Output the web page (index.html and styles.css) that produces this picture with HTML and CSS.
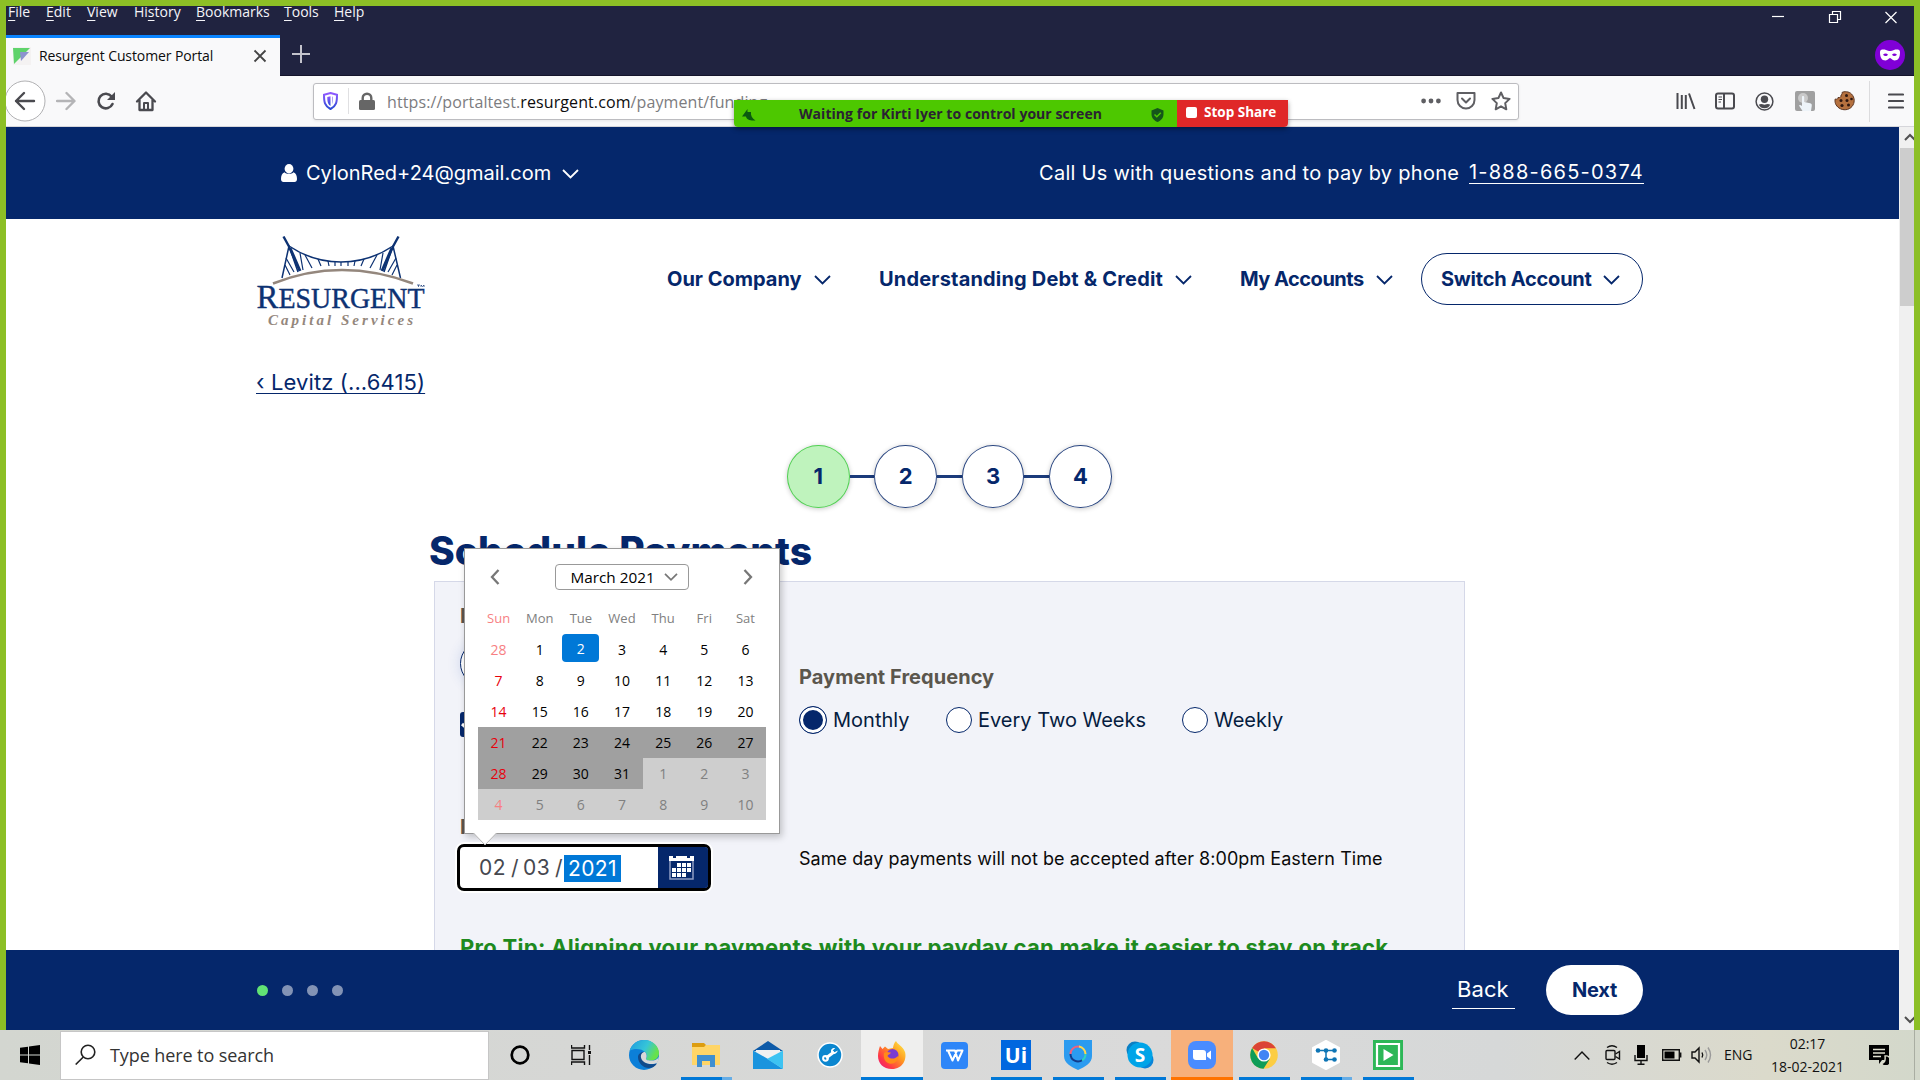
FILE: index.html
```html
<!DOCTYPE html>
<html lang="en">
<head>
<meta charset="utf-8">
<title>Resurgent Customer Portal</title>
<link rel="stylesheet" href="styles.css">
</head>
<body>
<div class="window">
  <div class="titlebar">
    <nav class="menubar">
      <span class="m-file"><u>F</u>ile</span><span class="m-edit"><u>E</u>dit</span><span class="m-view"><u>V</u>iew</span><span class="m-history">Hi<u>s</u>tory</span><span class="m-bookmarks"><u>B</u>ookmarks</span><span class="m-tools"><u>T</u>ools</span><span><u>H</u>elp</span>
    </nav>
    <svg class="win-controls" width="128" height="16" viewBox="0 0 128 16" fill="none" stroke="#fff" stroke-width="1.2">
      <path d="M0 7.500h12"/><path d="M57.5 5.500h8v8h-8zM60.500 5.500v-3h8v8h-3"/><path d="M113.500 3l11 11M124.500 3l-11 11"/>
    </svg>
  </div>
  <div class="tabstrip">
    <div class="tab">
      <svg width="18" height="18" viewBox="0 0 18 18"><path fill="#f4f2f2" d="M0 0h18v18H0z"/><path fill="#5fd36b" d="M0 1h17L1 17z"/><path fill="#8c93cf" d="M7 5h9L8 14z"/></svg>
      <span class="tab-title">Resurgent Customer Portal</span>
      <svg class="tab-close" width="14" height="14" viewBox="0 0 14 14" stroke="#444" stroke-width="1.800"><path d="M1.500 1.500l11 11M12.500 1.500l-11 11"/></svg>
    </div>
    <svg class="tab-new" width="18" height="18" viewBox="0 0 18 18" stroke="#c3c3cc" stroke-width="2"><path d="M9 0v18M0 9h18"/></svg>
    <svg class="mask" width="30" height="30" viewBox="0 0 30 30"><circle cx="15" cy="15" r="15" fill="#8000d7"/><path fill="#fff" fill-rule="evenodd" d="M5 12c0-3 4-2.500 6-2 2 .6 2.500 1 4 1s2-.4 4-1c2-.5 6-1 6 2 0 5-1.500 8.500-5.500 8.500-2.500 0-3-2.500-4.500-2.500s-2 2.500-4.500 2.500C6.500 20.500 5 17 5 12zm3 2.800c1.500 1.700 3.800 1.700 5 0-1.200-1.700-3.500-1.700-5 0zm9 0c1.200 1.700 3.500 1.700 5 0-1.500-1.700-3.800-1.700-5 0z"/></svg>
  </div>
  <div class="toolbar">
    <svg class="nav-back" width="40" height="44" viewBox="0 0 40 44"><circle cx="19" cy="22" r="20" fill="#fff" stroke="#b1b1b3"/><path fill="none" stroke="#4a4a4f" stroke-width="2.400" stroke-linecap="round" stroke-linejoin="round" d="M28 22H10M18 14l-8 8 8 8"/></svg>
    <svg class="nav-fwd" width="20" height="20" viewBox="0 0 20 20" fill="none" stroke="#b4b4b6" stroke-width="2.400" stroke-linecap="round" stroke-linejoin="round"><path d="M1 10h17M10.500 2l8 8-8 8"/></svg>
    <svg class="nav-reload" width="20" height="20" viewBox="0 0 20 20"><path fill="none" stroke="#4a4a4f" stroke-width="2.600" stroke-linecap="round" d="M15.600 5.500A7.300 7.300 0 1 0 16.500 13"/><path fill="#4a4a4f" d="M19 1v8h-8z"/></svg>
    <svg class="nav-home" width="22" height="22" viewBox="0 0 22 22" fill="none" stroke="#4a4a4f" stroke-width="2.300" stroke-linejoin="round" stroke-linecap="round"><path d="M2 11.500L11 2.500l9 9M4.500 10v10h13V10"/><path stroke-width="2" d="M9 19v-6h4v6"/></svg>
    <div class="urlbar">
      <svg class="u-shield" width="15" height="18" viewBox="0 0 15 18"><defs><linearGradient id="sh" x1="0" y1="0" x2="0" y2="1"><stop offset="0" stop-color="#9059ff"/><stop offset="1" stop-color="#2a4bd5"/></linearGradient></defs><path fill="none" stroke="url(#sh)" stroke-width="2" d="M7.500 1L14 2.800c0 7-.5 11-6.500 14.200C1.500 13.800 1 9.800 1 2.800z"/><path fill="url(#sh)" d="M7.500 4.200L4.300 5c0 4.500.5 7 3.200 9zM9 4.600l.6.200c0 3 0 5.500-.6 7.500z"/></svg>
      <span class="u-sep"></span>
      <svg class="u-lock" width="16" height="18" viewBox="0 0 16 18"><rect x="0" y="8" width="16" height="10" rx="1.500" fill="#666"/><path d="M3.700 9V6a4.300 4.300 0 0 1 8.600 0v3" fill="none" stroke="#666" stroke-width="2.400"/></svg>
      <span class="url">https://portaltest.<b>resurgent.com</b>/payment/funding</span>
      <svg class="u-dots" width="20" height="6" viewBox="0 0 20 6" fill="#5f5f63"><circle cx="2.600" cy="3" r="2.400"/><circle cx="10" cy="3" r="2.400"/><circle cx="17.400" cy="3" r="2.400"/></svg>
      <svg class="u-pocket" width="20" height="18" viewBox="0 0 20 18" fill="none" stroke="#5f5f63" stroke-width="2" stroke-linejoin="round" stroke-linecap="round"><path d="M1.500 1h17v7a8.500 8.500 0 0 1-17 0z"/><path d="M6 6.500l4 4 4-4"/></svg>
      <svg class="u-star" width="20" height="20" viewBox="0 0 20 20" fill="none" stroke="#5f5f63" stroke-width="2" stroke-linejoin="round"><path d="M10 1.500l2.600 5.600 6 .8-4.400 4.200 1.100 6.200L10 15.300l-5.300 3 1.100-6.200L1.400 7.900l6-.8z"/></svg>
    </div>
    <svg class="t-lib" width="20" height="18" viewBox="0 0 20 18" stroke="#4a4a4f" stroke-width="2"><path d="M1.500 1v16M5.800 3v14M9.800 3v14M13 1.500L18.500 17"/></svg>
    <svg class="t-side" width="20" height="18" viewBox="0 0 20 18" fill="none" stroke="#4a4a4f" stroke-width="2"><rect x="1" y="1.500" width="18" height="15" rx="2"/><path d="M9 2v14"/><path stroke-width="1.200" d="M3.500 5h3.500M3.500 7.500h3.500M3.500 10h2.500"/></svg>
    <svg class="t-acct" width="19" height="19" viewBox="0 0 19 19"><circle cx="9.500" cy="9.500" r="8.400" fill="none" stroke="#4a4a4f" stroke-width="1.500"/><circle cx="9.500" cy="7.300" r="3.700" fill="#4a4a4f"/><path fill="#4a4a4f" d="M3.800 12.800c1.500-1 3-1 5.700 0 2.700-1 4.200-1 5.700 0-1 2.500-3 3.400-5.700 3.400s-4.700-.9-5.700-3.400z"/></svg>
    <svg class="t-touch" width="20" height="20" viewBox="0 0 20 20"><rect width="20" height="20" rx="2" fill="#a0a0a0"/><circle cx="8" cy="7" r="5" fill="#c9c9c9"/><path fill="#eef4f9" d="M7 5.500c1-1 2.200-.4 2.200.8V11l6 1.300c1.600.4 1.800 1.400 1.500 3L16 20H7.500L4 14.500c.6-1 1.800-.6 3 .5z"/></svg>
    <svg class="t-cookie" width="21" height="20" viewBox="0 0 21 20"><path fill="#b5713f" stroke="#5b3420" stroke-width="1" d="M8 1.500C10 .2 15 .3 17.500 3c3.500 3.500 3.500 9 .5 12.500-3 3.700-9 4.300-13 1.500-3.500-2.500-4.500-6-3.800-9C3 8.500 4 8 4 6.500c2 .3 3.500-.5 3-2.500 1-.5 1.400-1.500 1-2.500z"/><g fill="#2e1710"><circle cx="12.500" cy="4.500" r="1.500"/><circle cx="7" cy="9.500" r="1.500"/><circle cx="13" cy="9.500" r="1.500"/><circle cx="17.500" cy="8" r="1.300"/><circle cx="8" cy="14.500" r="1.600"/><circle cx="14.500" cy="14" r="1.500"/></g></svg>
    <span class="t-sep"></span>
    <svg class="t-menu" width="16" height="16" viewBox="0 0 16 16" stroke="#4a4a4f" stroke-width="2.200" stroke-linecap="round"><path d="M1 1.500h14M1 8h14M1 14.500h14"/></svg>
  </div>

  <div class="share">
    <div class="share-status">
      <svg width="14" height="12" viewBox="0 0 14 12"><path fill="#0b5a10" d="M5.500 0v3H9c-.5 3.500 1 6.500 4.500 8.500C8 12 4.500 10.500 4 7.500H0z"/></svg>
      <span>Waiting for Kirti Iyer to control your screen</span>
      <svg width="13" height="14" viewBox="0 0 13 14"><path fill="#14561a" d="M6.500 0L12.500 2.500V6c0 4-2.500 6.500-6 8-3.500-1.500-6-4-6-8V2.500z"/><path d="M3.500 6.500l2.300 2.300 4-4" fill="none" stroke="#4dc800" stroke-width="1.500"/></svg>
    </div>
    <div class="share-stop"><i></i><span>Stop Share</span></div>
  </div>

  <div class="viewport">
    <main class="page">
      <header class="topbar">
        <svg class="user" width="16" height="18" viewBox="0 0 16 18" fill="#fff"><ellipse cx="8" cy="4.700" rx="4.400" ry="4.700"/><path d="M3.500 8.200C5 10.200 11 10.200 12.500 8.200 15 9 16 12 16 15c0 2-1 3-2.500 3h-11C1 18 0 17 0 15c0-3 1-6 3.500-6.800z"/></svg>
        <span class="email">CylonRed+24@gmail.com</span>
        <svg class="chev" width="17" height="10" viewBox="0 0 17 10"><path d="M1 1l7.500 7.500L16 1"/></svg>
        <span class="call">Call Us with questions and to pay by phone</span>
        <a class="phone">1-888-665-0374</a>
      </header>
      <div class="mainnav">
        <svg class="logo" width="172" height="96" viewBox="256 234 172 96">
          <g fill="none" stroke="#0d3273" stroke-width="1.500">
            <path stroke-width="2.400" d="M283.500 236.500l5.500 10M398.500 236.500l-5.500 10"/>
            <path d="M289 246l-7 32M393 246l7.500 32M289 246l9 26M393 246l-9 26"/>
            <path stroke-width="3" d="M290 248l10 23M392 248l-10 23"/>
            <path d="M289 246q24 16 52 16t52-16"/>
            <path stroke-width="1.200" d="M286 258l8 14M285 265l5 10M396 258l-8 14M397 265l-5 10M305 255l7 13M318 259l3 7M328 261l1 5M335 262v4M341 262v4M348 262v4M355 261l-1 5M364 259l-3 7M377 255l-7 13M300 253l3 17M383 253l-3 17"/>
          </g>
          <path d="M273 283.500q68-27 140 0" fill="none" stroke="#94877d" stroke-width="2.600"/>
          <text class="logo-name" x="256.500" y="307.500" textLength="168" lengthAdjust="spacingAndGlyphs"><tspan font-size="34">R</tspan>ESURGENT</text>
          <text class="logo-sub" x="268" y="325" textLength="145">Capital Services</text>
          <path d="M417 285h3M418.500 285v2M421 287v-2l1.500 1.500L424 285v2" fill="none" stroke="#0d3273" stroke-width=".7"/>
        </svg>
        <span class="n1">Our Company</span><svg class="chev c1" width="17" height="10" viewBox="0 0 17 10"><path d="M1 1l7.500 7.500L16 1"/></svg>
        <span class="n2">Understanding Debt &amp; Credit</span><svg class="chev c2" width="17" height="10" viewBox="0 0 17 10"><path d="M1 1l7.500 7.500L16 1"/></svg>
        <span class="n3">My Accounts</span><svg class="chev c3" width="17" height="10" viewBox="0 0 17 10"><path d="M1 1l7.500 7.500L16 1"/></svg>
        <div class="pill"><span>Switch Account</span><svg class="chev" width="17" height="10" viewBox="0 0 17 10"><path d="M1 1l7.500 7.500L16 1"/></svg></div>
      </div>
      <a class="crumb">‹ Levitz (...6415)</a>
      <div class="steps"><b class="on">1</b><i></i><b>2</b><i></i><b>3</b><i></i><b>4</b></div>
      <h1>Schedule Payments</h1>
      <section class="card">
        <div class="cols">
          <div class="left">
            <div class="label">P</div>
            <div class="amount"></div>
            <div class="check"><svg width="25" height="25" viewBox="0 0 25 25"><path d="M2 12l8 7L21 6" fill="none" stroke="#fff" stroke-width="3"/></svg></div>
            <div class="label second">P</div>
            <div class="date">
              <span class="dval">02</span><span class="dsl">/</span><span class="dval">03</span><span class="dsl">/</span><span class="dyear">2021</span>
              <span class="dbtn"><svg width="25" height="25" viewBox="0 0 25 25"><path d="M1 6v18h23V6" fill="none" stroke="#8f9dc3" stroke-width="1.500"/><path fill="#fff" d="M0 1h4v2h3V1h11v2h3V1h4v5H0z"/><g fill="#fff"><path d="M8 8h4v4H8zM13 8h4v4h-4zM18 8h4v4h-4zM3 13h4v4H3zM8 13h4v4H8zM13 13h4v4h-4zM18 13h4v4h-4zM3 18h4v4H3zM8 18h4v4H8zM13 18h4v4h-4z"/></g></svg></span>
              <div class="picker">
                <div class="phead">
                  <svg width="10" height="16" viewBox="0 0 10 16"><path d="M8.500 1L2 8l6.500 7"/></svg>
                  <div class="month"><span>March 2021</span><svg width="14" height="8" viewBox="0 0 14 8"><path d="M1 .8l6 6 6-6"/></svg></div>
                  <svg width="10" height="16" viewBox="0 0 10 16"><path d="M1.500 1L8 8l-6.500 7"/></svg>
                </div>
                <div class="days names"><span class="s">Sun</span><span>Mon</span><span>Tue</span><span>Wed</span><span>Thu</span><span>Fri</span><span>Sat</span></div>
                <div class="days">
                  <span class="s out">28</span><span>1</span><span><em>2</em></span><span>3</span><span>4</span><span>5</span><span>6</span>
                  <span class="s">7</span><span>8</span><span>9</span><span>10</span><span>11</span><span>12</span><span>13</span>
                  <span class="s">14</span><span>15</span><span>16</span><span>17</span><span>18</span><span>19</span><span>20</span>
                  <span class="s d">21</span><span class="d">22</span><span class="d">23</span><span class="d">24</span><span class="d">25</span><span class="d">26</span><span class="d">27</span>
                  <span class="s d">28</span><span class="d">29</span><span class="d">30</span><span class="d">31</span><span class="l">1</span><span class="l">2</span><span class="l">3</span>
                  <span class="s l out">4</span><span class="l">5</span><span class="l">6</span><span class="l">7</span><span class="l">8</span><span class="l">9</span><span class="l">10</span>
                </div>
                <svg class="ptr" width="24" height="13" viewBox="0 0 24 13"><path fill="#fff" stroke="#b5b5b5" d="M.5 0L12 12 23.500 0"/></svg>
              </div>
            </div>
          </div>
          <div class="right">
            <div class="label freq">Payment Frequency</div>
            <div class="radios"><i class="sel"></i><span class="r1">Monthly</span><i></i><span class="r2">Every Two Weeks</span><i></i><span>Weekly</span></div>
            <p>Same day payments will not be accepted after 8:00pm Eastern Time</p>
          </div>
        </div>
        <div class="tip">Pro Tip: Aligning your payments with your payday can make it easier to stay on track</div>
      </section>
      <footer class="foot">
        <div class="dots"><i class="on"></i><i></i><i></i><i></i></div>
        <a class="back">Back</a><span class="next">Next</span>
      </footer>
    </main>
    <div class="scroll">
      <svg width="14" height="21" viewBox="0 0 14 21"><path d="M5 13l5-5 5 5"/></svg>
      <span class="thumb"></span>
      <svg class="down" width="14" height="21" viewBox="0 0 14 21"><path d="M5 8l5 5 5-5"/></svg>
    </div>
  </div>
</div>

<div class="taskbar">
  <div class="start"><svg width="20" height="20" viewBox="0 0 20 20"><path d="M0 2.800L8 1.700V9.500H0zM9 1.500L20 0v9.500H9zM0 10.500h8v7.800l-8-1.100zM9 10.500h11V20L9 18.500z"/></svg></div>
  <div class="search"><svg width="21" height="21" viewBox="0 0 21 21" fill="none" stroke="#222" stroke-width="1.600"><circle cx="13" cy="8" r="6.800"/><path d="M8.300 13L.7 20.500"/></svg><span>Type here to search</span></div>
  <div class="slot"><svg width="20" height="20" viewBox="0 0 20 20"><circle cx="10" cy="10" r="8.300" fill="none" stroke="#000" stroke-width="2.700"/></svg></div>
  <div class="slot"><svg width="22" height="20" viewBox="0 0 22 20" fill="none" stroke="#111" stroke-width="1.400"><path d="M1 5.500h12v9H1zM.5 0v3h13V0M.5 20v-3h13v3M18.500 0v5M18.500 10v10"/><path fill="#111" stroke="none" d="M17 6h3v3h-3z"/></svg></div>
  <div class="slot"><svg width="30" height="30" viewBox="0 0 30 30"><defs><linearGradient id="eg" x1="0" x2="1" y1="0" y2=".4"><stop offset="0" stop-color="#1d9be0"/><stop offset=".6" stop-color="#36c5d8"/><stop offset="1" stop-color="#67e24b"/></linearGradient></defs><circle cx="15" cy="15" r="15" fill="#0c7fd8"/><path fill="url(#eg)" d="M.5 11C3 3.500 8.500 0 15 0c9 0 15 6.500 15 13 0 5-4 7.500-8 7.500-3.500 0-5.500-1-5-2 1.500-2 1.200-4-.5-6C13 8.500 5 8 .5 11z"/><path fill="#114a8b" d="M9 17c0 6 5 11 11 11 3 0 6-1.500 8-4.500-6 2-13 0-14.500-5-.8-3 .5-5.500 1.500-6.500-3 0-6 2-6 5z"/><path fill="#d8d8d8" d="M16 12c-3 0-4.500 2.500-4 5.500.7 4 5 6.500 10.500 6.500 2.500 0 4-.5 6-1.500l1.500-5.500c-2 3-5 3.500-8 3.500-3.500 0-5.500-1-5-2 1.200-1.800.8-4.500-1-6.500z"/></svg></div>
  <div class="slot run more"><svg width="28" height="24" viewBox="0 0 28 24"><path fill="#dd9d10" d="M0 0h12l2 2-2 4H0z"/><path fill="#ffd567" d="M0 4h12l2-2h14v20H0z"/><path fill="#3f8fd0" d="M5 24V12h18v12h-5v-6h-8v6z"/></svg></div>
  <div class="slot"><svg width="30" height="28" viewBox="0 0 30 28"><path fill="#0d5aa8" d="M15 0l15 10H0z"/><path fill="#f1f1f1" d="M3 9h24v9H3z"/><path fill="#1a94de" d="M0 9.500L15 18 30 28H0z"/><path fill="#3dc3f2" d="M30 9.500L14 18l16 10z"/></svg></div>
  <div class="slot"><svg width="26" height="26" viewBox="0 0 26 26"><circle cx="13" cy="13" r="12" fill="#0b86cf" stroke="#fff" stroke-width="1.500"/><path d="M9 16l8-6" stroke="#fff" stroke-width="3"/><circle cx="8.500" cy="16.300" r="2.400" fill="none" stroke="#fff" stroke-width="2"/><path d="M20.800 8.500l-3.300 1.800-1.800-1.800L18.300 6c-3.300-.3-5 2-4 4.300s5.500 2.500 6.500-1.800z" fill="#fff"/></svg></div>
  <div class="slot active"><svg width="30" height="30" viewBox="0 0 30 30"><defs><linearGradient id="ff" x1="1" x2="0" y1="0" y2="1"><stop offset="0" stop-color="#fff44f"/><stop offset=".4" stop-color="#ff9a1f"/><stop offset=".75" stop-color="#ff3647"/><stop offset="1" stop-color="#e31587"/></linearGradient></defs><path fill="url(#ff)" d="M3 6l2.500 3L8 6.500 11 9l5-1c.5-3 1-5 3-7 1 3 7 5 9 11 2 7-2 17-13 17C6 29 1 23 1 16c0-4 1-7 2-10z"/><circle cx="15.500" cy="15" r="6" fill="#7a3bd1"/><path fill="#ff8b1a" d="M7 13c3-2 5 0 7-.5-1 2-3 2-3.500 3.500 3 4 8 3 11-.5 0 6-5 9-9 8-4-.8-6.500-5-5.500-10.500z"/></svg></div>
  <div class="slot"><svg width="27" height="27" viewBox="0 0 27 27"><rect width="27" height="27" rx="4" fill="#2e86f8"/><path d="M5 8.500h9l3 10 4.500-10H16l-4.500 10L7 8.500" fill="none" stroke="#fff" stroke-width="2" stroke-linejoin="round"/></svg></div>
  <div class="slot run"><div class="ui">Ui</div></div>
  <div class="slot run"><svg width="28" height="30" viewBox="0 0 28 30"><path fill="#2b9bf0" d="M0 0h28v16c0 7-7 11-14 14C7 27 0 23 0 16z"/><g fill="none" stroke-width="2"><path stroke="#123c8c" d="M6.500 14a7.500 7.500 0 0 0 12 6"/><path stroke="#f2607d" d="M6.500 14a7.500 7.500 0 0 1 9.500-7.300"/><path stroke="#ffd84f" d="M15 6.600a7.500 7.500 0 0 1 6.500 7.400"/><path stroke="#2fd3c0" d="M21.500 14a7.500 7.500 0 0 1-3.500 6.400"/></g></svg></div>
  <div class="slot run"><svg width="28" height="28" viewBox="0 0 28 28"><circle cx="9" cy="9" r="8.500" fill="#0a7fc4"/><circle cx="19" cy="19" r="8.500" fill="#0a84d8"/><circle cx="14" cy="14" r="12.500" fill="#00a4e8"/><text class="skype" x="14" y="21" text-anchor="middle">S</text></svg></div>
  <div class="slot zoom"><svg width="28" height="28" viewBox="0 0 28 28"><rect width="28" height="28" rx="8" fill="#4a8cff"/><path fill="#fff" d="M5 9h10q3 0 3 3v7H8q-3 0-3-3zM19 12.500L23 9.500v9l-4-3z"/></svg></div>
  <div class="slot run"><svg width="28" height="28" viewBox="0 0 28 28"><circle cx="14" cy="14" r="13.800" fill="#fccd43"/><path fill="#db4437" d="M14 14L2.100 7A13.800 13.800 0 0 1 26 7.300H14z"/><path fill="#0f9d58" d="M2.100 7A13.800 13.800 0 0 0 13.500 27.800L20 17.500 14 14 8 17.300z"/><circle cx="14" cy="14" r="6.600" fill="#fff"/><circle cx="14" cy="14" r="5.200" fill="#4285f4"/></svg></div>
  <div class="slot run more"><svg width="28" height="30" viewBox="0 0 28 30"><path fill="#fff" stroke="#fff" stroke-width="2" stroke-linejoin="round" d="M14 1l13 7v14l-13 7-13-7V8z"/><path d="M6 10.500h16M14 10.500v9h8" stroke="#0e75b5" stroke-width="1.500" fill="none"/><g fill="#0e75b5"><circle cx="6" cy="10.500" r="2.300"/><circle cx="14" cy="10.500" r="2.300"/><circle cx="22.500" cy="10.500" r="2.300"/><circle cx="14" cy="19.500" r="2.300"/><circle cx="22.500" cy="19.500" r="2.300"/></g></svg></div>
  <div class="slot run"><svg width="30" height="30" viewBox="0 0 30 30"><path fill="#2db757" d="M0 0h30v30H0z"/><path fill="none" stroke="#fff" stroke-width="2.200" d="M4 4h22v22H4z"/><path fill="#fff" d="M10.500 9l10 6-10 6z"/></svg></div>
  <div class="tray">
    <svg width="16" height="9" viewBox="0 0 16 9"><path d="M.7 8.500L8 1l7.300 7.500"/></svg>
    <svg class="y1" width="16" height="20" viewBox="0 0 16 20"><rect x="1" y="5.500" width="9" height="9" rx="1"/><path d="M10.500 9l4-2.500v7.500l-4-2.500M2 2.500C5 .5 9 .5 12 2.500M2 17.500c3 2 7 2 10 0"/></svg>
    <svg class="y2" width="14" height="20" viewBox="0 0 14 20"><path fill="#000" stroke="none" d="M3 0h8v13H3z"/><path d="M1 10v5.500h12V10M7 15.500V19M3.500 19.200h7"/></svg>
    <svg class="y3" width="20" height="12" viewBox="0 0 20 12"><path d="M.7 .7h16.600v10.600H.7zM18.700 3.500v5"/><path fill="#000" stroke="none" d="M2.500 2.500h10v7h-10z"/></svg>
    <svg class="y4" width="21" height="18" viewBox="0 0 21 18"><path d="M1 6h3l4-4v14l-4-4H1zM11 6.500q1.500 2.500 0 5"/><path stroke="#999" d="M14 4q3.500 5 0 10M17 1.500q5 7.500 0 15"/></svg>
    <span class="eng">ENG</span>
    <div class="clock"><span>02:17</span><span>18-02-2021</span></div>
    <svg class="y5" width="20" height="20" viewBox="0 0 20 20"><path fill="#000" stroke="none" d="M0 0h20v15h-7l-3 4v-4H0z"/><path stroke="#e0e0d0" d="M4 4.500h12M4 8h12M4 11.500h8"/><path fill="#000" stroke="#e0e0d0" d="M16 11a5 5 0 1 1-3.500 7.500Q17 17.500 16 11z"/></svg>
    <i class="peek"></i>
  </div>
</div>
</body>
</html>
```
FILE: styles.css
```css
* { box-sizing: border-box; }
body { margin: 0; width: 1920px; height: 1080px; overflow: hidden; font-family: "Inter", sans-serif; font-size: 20px; color: #05276b; }
svg { display: block; flex: none; }
span, a { white-space: nowrap; }

.window { position: relative; display: flex; flex-direction: column; height: 1030px; border: 6px solid #8cbf26; border-bottom: 0; font-weight: 400; }

/* browser chrome */
.titlebar { display: flex; height: 29px; background: #202340; }
.menubar { display: flex; width: 1766px; padding-left: 2px; font: 14px/11px "Open Sans", sans-serif; color: #f4f4f8; }
.menubar u { text-underline-offset: 3px; text-decoration-thickness: 1px; }
.m-file { width: 38px; } .m-edit { width: 41px; } .m-view { width: 47px; } .m-history { width: 62px; } .m-bookmarks { width: 88px; } .m-tools { width: 50px; }
.win-controls { margin-top: 3px; }
.tabstrip { display: flex; height: 41px; background: #202340; border-bottom: 1px solid #14142b; }
.tab { display: flex; align-items: center; width: 274px; height: 42px; padding: 0 13px 0 7px; background: #f9f9fa; border-top: 3px solid #0a84ff; }
.tab svg { margin-top: -3px; }
.tab-title { margin: -4px 0 0 8px; font: 14px/20px "Open Sans", sans-serif; letter-spacing: -.1px; color: #0c0c0d; }
.tab-close { margin-left: auto; }
.tab-new { margin: 10px 0 0 12px; }
.mask { margin: 5px 9px 0 auto; }
.toolbar { display: flex; align-items: center; height: 51px; background: #f9f9fa; border-bottom: 1px solid #d6d6da; }
.nav-fwd { margin-left: 10px; } .nav-reload { margin-left: 20px; } .nav-home { margin-left: 19px; }
.urlbar { display: flex; align-items: center; width: 1206px; height: 37px; margin-left: 156px; padding-left: 9px; background: #fff; border: 1px solid #bcbcc0; border-radius: 3px; box-shadow: 0 1px 3px rgba(0,0,0,.08); }
.u-sep { width: 1px; height: 26px; margin-left: 10px; background: #e0e0e2; }
.u-lock { margin-left: 10px; }
.url { width: 1034px; margin: 1px 0 0 12px; font: 16px/24px "Open Sans", sans-serif; letter-spacing: .1px; color: #7c7c80; }
.url b { font-weight: 400; color: #0c0c0d; }
.u-pocket { margin-left: 15px; } .u-star { margin-left: 15px; }
.t-lib { margin-left: 157px; } .t-side { margin-left: 19px; } .t-acct { margin-left: 20px; } .t-touch { margin-left: 21px; } .t-cookie { margin-left: 19px; }
.t-sep { width: 1px; height: 41px; margin-left: 14px; background: #dcdcde; }
.t-menu { margin-left: 18px; }

/* screen sharing strip floating over the browser */
.share { position: absolute; left: 728px; top: 94px; display: flex; height: 27px; border-radius: 0 0 4px 4px; overflow: hidden; box-shadow: 0 2px 5px rgba(0,0,0,.4); font: 700 14px/20px "Open Sans", sans-serif; }
.share-status { display: flex; align-items: center; width: 443px; padding: 0 13px 0 8px; background: #4dc800; color: #2a2233; }
.share-status span { width: 395px; padding-left: 43px; letter-spacing: .05px; }
.share-status svg { margin-top: 2px; }
.share-stop { display: flex; align-items: center; width: 111px; padding: 0 0 3px 9px; color: #fff; font-size: 13.500px; background: #e02828; }
.share-stop i { width: 11px; height: 11px; margin-right: 7px; border-radius: 2px; background: #fff; }

/* page */
.viewport { display: flex; height: 903px; }
.page { display: flex; flex-direction: column; width: 1893px; background: #fff; overflow: hidden; }
.chev { fill: none; stroke: currentColor; stroke-width: 1.800; }
.topbar { display: flex; flex: none; align-items: center; height: 92px; padding-left: 275px; background: #05276b; color: #fff; }
.email { width: 256px; margin-left: 9px; }
.topbar .chev { margin-top: 2px; }
.call { width: 430px; margin: -1px 0 0 460px; letter-spacing: .28px; }
.phone { letter-spacing: 1.220px; line-height: 20px; padding-bottom: 1px; border-bottom: 1px solid #fff; }
.mainnav { display: flex; flex: none; align-items: center; height: 120px; padding-left: 250px; font-weight: 700; }
.logo { margin: 6px 239px 0 0; }
.logo-name { font: 29px "Liberation Serif", serif; fill: #0d3273; stroke: #0d3273; stroke-width: .4px; }
.logo-sub { font: italic 700 15px "Liberation Serif", serif; fill: #94877d; }
.mainnav .chev { margin-top: 2px; }
.c1 { margin-left: 12px; } .c2 { margin-left: 11px; } .c3 { margin-left: 12px; }
.n1 { width: 134.500px; } .n2 { width: 285px; margin-left: 48.500px; letter-spacing: .18px; } .n3 { width: 124px; margin-left: 48px; letter-spacing: -.5px; }
.pill { display: flex; align-items: center; justify-content: space-between; width: 222px; height: 52px; margin-left: 28px; padding: 0 22px 0 19px; border: 1px solid #05276b; border-radius: 26px; letter-spacing: -.25px; }
.crumb { align-self: flex-start; margin: 28px 0 0 250px; font-size: 22px; line-height: 30px; letter-spacing: .12px; text-decoration: underline; text-underline-offset: 3px; text-decoration-thickness: 1px; }
.steps { display: flex; align-items: center; margin: 48px 0 0 781px; }
.steps b { display: flex; align-items: center; justify-content: center; width: 62.500px; height: 63px; padding-bottom: 1px; border: 1px solid #2a4680; border-radius: 50%; font-size: 22px; box-shadow: 0 1px 5px rgba(0,0,0,.22); }
.steps .on { background: #bff3bd; border-color: #52d154; }
.steps i { width: 24.900px; height: 3px; background: #1b3b7b; }
h1 { margin: 22px 0 0 423px; font-size: 39px; line-height: 42px; font-weight: 800; letter-spacing: .05px; }
.card { flex: none; width: 1031px; height: 369px; margin: 9px 0 0 428px; padding-left: 25px; background: #f2f3f9; border: 1px solid #d5d8e8; border-bottom: 0; }
.cols { display: grid; grid-template-columns: 339px 1fr; height: 352px; }
.label { height: 20px; line-height: 20px; font-weight: 700; color: #5b564d; }
.left { padding-top: 24px; }
.amount { width: 250px; height: 45px; margin-top: 15px; border: 1px solid #05276b; border-radius: 23px; background: #fff; box-shadow: 0 0 14px rgba(40,80,180,.16); }
.check { width: 25px; height: 25px; margin-top: 26px; border-radius: 3px; background: #05276b; }
.second { margin-top: 80px; }
.date { position: relative; display: flex; align-items: center; width: 254px; height: 47px; margin: 7px 0 0 -3px; padding-left: 19px; background: #fff; border: 3px solid #000; border-radius: 7px; box-shadow: 0 0 0 2px #fff; font-size: 21px; line-height: 26px; color: #46484f; }
.dval { width: 29px; letter-spacing: .5px; } .dsl { width: 15px; padding-left: 3px; }
.dval, .dsl { padding-top: 1px; }
.dval + .dsl + .dyear { width: 57px; height: 27px; margin: 1px 0 0 -3px; padding-left: 4px; line-height: 27px; background: #0078d7; color: #fff; letter-spacing: .4px; }
.dbtn { display: flex; align-items: center; width: 50px; height: 41px; margin-left: auto; padding-left: 11px; background: #05276b; border-radius: 0 3px 3px 0; }
.freq { margin-top: 85px; letter-spacing: .04px; }
.radios { display: flex; align-items: center; height: 28px; margin-top: 19px; color: #061c3f; }
.radios i { width: 26px; height: 26px; margin-right: 6px; border: 1px solid #05276b; border-radius: 50%; background: #fff; }
.radios .sel { width: 28px; height: 28px; border-width: 1.500px; background: #05276b; box-shadow: inset 0 0 0 3px #fff; }
.r1 { width: 113px; } .r2 { width: 204px; }
.right p { margin: 115px 0 0; font-size: 18px; line-height: 20px; letter-spacing: .05px; color: #0a0a0a; }
.tip { font-size: 22px; line-height: 26px; font-weight: 700; letter-spacing: .29px; color: #1e8a1e; white-space: nowrap; }

/* native date popup, floats above the form */
.picker { position: absolute; left: 4px; top: -299px; width: 316px; height: 286px; padding: 15px 12px 0 13px; background: #fff; border: 1px solid #999; box-shadow: 2px 3px 7px rgba(0,0,0,.22); font: 14px/31px "Open Sans", sans-serif; color: #000; }
.phead { display: flex; justify-content: space-between; align-items: center; height: 26px; padding: 0 14px 0 12px; }
.phead svg { fill: none; stroke: #777; stroke-width: 2.300; }
.month { display: flex; align-items: center; justify-content: space-between; width: 134px; height: 26px; padding: 0 10px 0 15px; border: 1px solid #999; border-radius: 4px; font-size: 15.300px; }
.month svg { stroke-width: 1.700; }
.days { display: grid; grid-template-columns: repeat(7, 1fr); grid-auto-rows: 31px; width: 288px; text-align: center; }
.names { margin-top: 12px; height: 32px; font-size: 13px; line-height: 32px; color: #808080; }
.days .s { color: #e8000c; }
.days.names .s, .days .out { color: #f77f83; }
.d { background: #a0a0a0; }
.days .l { background: #cecece; color: #808080; }
.days .l.out { color: #f77f83; }
.days em { display: block; width: 37px; height: 28px; margin-left: 2px; line-height: 30px; font-style: normal; border-radius: 4px; background: #0078d7; color: #fff; }
.ptr { position: absolute; left: 8px; top: 284px; }

.foot { position: relative; display: flex; flex: none; align-items: center; height: 80px; padding-left: 251px; background: #05276b; color: #fff; }
.dots { display: flex; gap: 14px; width: 1195px; }
.dots i { width: 11px; height: 11px; border-radius: 50%; background: #8393b5; }
.dots .on { background: #62e374; }
.back { width: 63px; height: 38px; padding-left: 5px; font-size: 22px; line-height: 36px; letter-spacing: .1px; border-bottom: 1px solid #fff; }
.next { display: flex; align-items: center; justify-content: center; width: 97px; height: 50px; margin-left: 31px; border-radius: 25px; background: #fff; color: #05276b; font-weight: 700; letter-spacing: -.2px; }
.scroll { display: flex; flex-direction: column; width: 15px; padding-left: 1px; background: #f0f0f0; }
.scroll svg { fill: none; stroke: #505050; stroke-width: 2; }
.thumb { width: 14px; height: 158px; background: #cdcdcd; }
.down { margin-top: auto; }

/* taskbar */
.taskbar { display: flex; height: 50px; background: linear-gradient(90deg, #d3d6d0 0, #d6d7d5 30%, #dadada 60%, #d6d8d8 78%, #dbdacb 92%, #d3d8cb 100%); }
.start { display: flex; align-items: center; width: 60px; padding-left: 20px; }
.search { display: flex; align-items: center; width: 429px; height: 49px; margin-top: 1px; padding: 0 0 2px 14px; background: #fff; border: 1px solid #c6c6c6; font: 18px/24px "Open Sans", sans-serif; letter-spacing: -.09px; color: #333; }
.search span { margin-left: 14px; }
.slot { position: relative; display: flex; align-items: center; justify-content: center; width: 62px; height: 50px; }
.run::after { content: ""; position: absolute; left: 6px; bottom: 0; width: 51px; height: 3px; background: #0078d7; }
.more::after { background: linear-gradient(90deg, #0078d7 80%, #66ade6 80%); }
.active { background: #efefee; border-bottom: 3px solid #0078d7; padding-top: 3px; }
.zoom { background: #f7b07b; border-bottom: 3px solid #ff7300; padding-top: 3px; }
.ui { width: 30px; height: 30px; background: #0067df; color: #fff; text-align: center; font: 700 21px/31px "Open Sans", sans-serif; }
.skype { font: 700 19px "Open Sans", sans-serif; fill: #fff; }
.tray { display: flex; align-items: center; flex: 1; padding-left: 155px; font: 14px/24px "Open Sans", sans-serif; color: #111; }
.tray svg { fill: none; stroke: #111; stroke-width: 1.400; }
.y1 { margin-left: 15px; } .y2 { margin-left: 13px; } .y3 { margin-left: 14px; } .y4 { margin-left: 9px; }
.eng { width: 46px; margin-left: 12px; }
.clock { display: flex; flex-direction: column; width: 75px; text-align: center; line-height: 23px; }
.y5 { margin-left: 24px; }
.peek { width: 1px; height: 50px; margin-left: 25px; background: #a9ada2; }
```
